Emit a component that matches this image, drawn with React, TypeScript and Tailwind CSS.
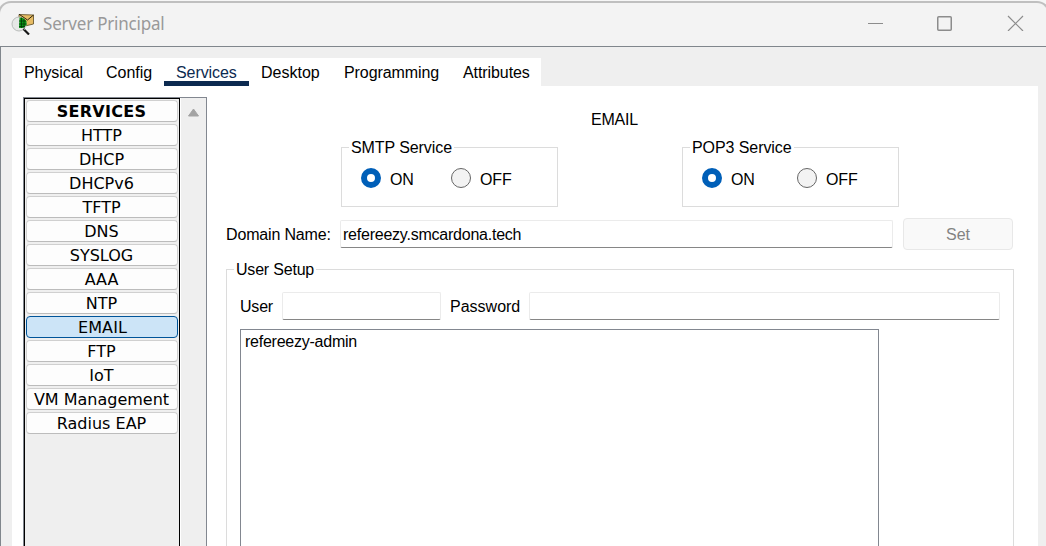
import React from "react";

const services = [
  "HTTP", "DHCP", "DHCPv6", "TFTP", "DNS", "SYSLOG", "AAA", "NTP",
  "EMAIL", "FTP", "IoT", "VM Management", "Radius EAP",
];

function AppIcon() {
  return (
    <svg className="h-6 w-6 shrink-0" viewBox="0 0 24 24">
      <path d="M8 3.5 L22.5 4 L22.5 13 L14 15 L8 11 Z" fill="#e6bb64" stroke="#5c4a20" strokeWidth="0.8" />
      <path d="M8 3.2 L16.5 9 L22.5 4" fill="none" stroke="#2f2810" strokeWidth="1" />
      <circle cx="8" cy="13" r="7" fill="#e6e8e6" stroke="#b9bcba" strokeWidth="1" />
      <path d="M8.5 6.5 L12 7 L15.5 10 L15.5 14 L12 17 L8 17 Z" fill="#0a9a18" />
      <path d="M8 10h7M8 13h7.5M8 15.5h6M10.5 6.5v10.5M13 8v9" stroke="#023806" strokeWidth="0.8" />
      <path d="M12.5 18 L18 23.5" stroke="#161616" strokeWidth="2.2" />
      <path d="M12.5 17.5 L14 19" stroke="#8b8b8b" strokeWidth="1" />
    </svg>
  );
}

function TitleBar() {
  return (
    <header className="flex h-[46px] shrink-0 bg-[#f6f6f6] pt-px">
      <div className="-ml-[2px] flex w-[1052px] shrink-0 items-start rounded-t-[13px] border-2 border-b-0 border-[#bfbfbf] bg-[#f3f3f3] pl-[11px]">
        <div className="pt-2"><AppIcon /></div>
        <h1 className="ml-[8px] mt-[8px] w-[800px] origin-left scale-y-[1.08] font-['Noto_Sans',sans-serif] text-[17px] leading-[26px] tracking-[-0.2px] text-[#999]">
          Server Principal
        </h1>
        <svg className="ml-[25px] mt-[12px] h-4 w-[157px] shrink-0" viewBox="0 0 157 16" fill="none" stroke="#8c8c8c">
          <path d="M0 8.5h15" />
          <rect x="69.75" y="1.75" width="13.5" height="13.5" rx="1" strokeWidth="1.5" />
          <path d="M140 1l15 15M155 1l-15 15" strokeWidth="1.2" />
        </svg>
      </div>
    </header>
  );
}

function Tabs() {
  return (
    <nav className="flex h-7 w-[529px] bg-white leading-[29px] tracking-[-0.08px]">
      <span className="w-[82px] pl-[12px]">Physical</span>
      <span className="w-[70px] pl-[12px] tracking-normal">Config</span>
      <span className="w-[85px] border-b-5 border-[#0c2a50] pl-[12px] text-[#0c2a50]">Services</span>
      <span className="w-[83px] pl-[12px] tracking-normal">Desktop</span>
      <span className="w-[118px] pl-[12px]">Programming</span>
      <span className="pl-[13px]">Attributes</span>
    </nav>
  );
}

function Sidebar() {
  return (
    <aside className="flex h-[460px] w-[184px] shrink-0 border border-[#828790] bg-[#efefef] font-['DejaVu_Sans',sans-serif] text-[16px]">
      <div className="flex w-[156px] flex-col gap-[2px] border border-black p-px">
        <div className="h-[22px] rounded-[4px] border border-[#d0d0d0] border-b-[#bcbcbc] bg-[#fdfdfd] pr-px text-center font-bold leading-[22px] tracking-[0.3px]">
          SERVICES
        </div>
        {services.map((name) => (
          <div
            key={name}
            className={
              name === "EMAIL"
                ? "h-[22px] whitespace-nowrap rounded-[4px] border border-[#005499] bg-[#cce4f7] pl-px text-center leading-[22px] tracking-[0.15px]"
                : "h-[22px] whitespace-nowrap rounded-[4px] border border-[#d0d0d0] border-b-[#bcbcbc] bg-[#fdfdfd] pr-px text-center leading-[22px]"
            }
          >
            {name}
          </div>
        ))}
      </div>
      <div className="w-[26px] border-l border-white pl-[6px] pt-[10px]">
        <svg className="h-[9px] w-[12px]" viewBox="0 0 12 9">
          <path d="M6.5 1 L11.5 8 H1.5 Z" fill="#a3a3a3" stroke="#a3a3a3" strokeLinejoin="round" />
        </svg>
      </div>
    </aside>
  );
}

function Radio({ on }: { on?: boolean }) {
  return on ? (
    <span className="h-5 w-5 shrink-0 rounded-full border-[6px] border-[#005fb8] bg-white" />
  ) : (
    <span className="h-5 w-5 shrink-0 rounded-full border border-[#666] bg-[#f3f3f3]" />
  );
}

function ServiceGroup({ title, wide }: { title: string; wide?: boolean }) {
  return (
    <section className="h-[60px] w-[217px] border border-[#dcdcdc]">
      <h2 className="-mt-[10px] ml-[7px] w-fit bg-white px-[2px] leading-[20px] tracking-[-0.08px]">{title}</h2>
      <div className="mt-[10px] flex h-5 pl-[19px] leading-[23px] tracking-[-0.1px]">
        <Radio on />
        <span className={wide ? "w-[75px] pl-[9px]" : "w-[70px] pl-[9px]"}>ON</span>
        <Radio />
        <span className="pl-[9px]">OFF</span>
      </div>
    </section>
  );
}

function EmailPanel() {
  return (
    <main className="ml-[19px] w-[788px]">
      <h2 className="mt-[13px] pl-[365px] leading-[20px] tracking-[-0.2px]">EMAIL</h2>
      <div className="mt-[17px] flex gap-[124px] pl-[115px]">
        <ServiceGroup title="SMTP Service" />
        <ServiceGroup title="POP3 Service" wide />
      </div>
      <div className="mt-[11px] flex h-8">
        <span className="w-[114px] leading-[33px] tracking-[-0.16px]">Domain Name:</span>
        <div className="mt-[2px] h-7 w-[553px] rounded-[2px] border border-[#ebebeb] border-b-[#868686] pl-[2px] leading-[27px] tracking-[-0.23px]">
          refereezy.smcardona.tech
        </div>
        <button className="ml-[10px] h-8 w-[110px] rounded-[4px] border border-[#e8e8e8] bg-[#f9f9f9] leading-[31px] text-[#838383]">
          Set
        </button>
      </div>
      <section className="mt-[19px] h-[320px] border border-[#dcdcdc]">
        <h2 className="-mt-[10px] ml-[7px] w-fit bg-white px-[2px] leading-[20px] tracking-[-0.2px]">User Setup</h2>
        <div className="mt-[12px] flex h-7 pl-[13px] leading-[29px]">
          <span className="w-[42px] tracking-[-0.2px]">User</span>
          <div className="w-[159px] rounded-[2px] border border-[#ebebeb] border-b-[#868686]" />
          <span className="w-[88px] pl-[9px]">Password</span>
          <div className="w-[471px] rounded-[2px] border border-[#ebebeb] border-b-[#868686]" />
        </div>
        <div className="ml-[13px] mt-[9px] h-[260px] w-[639px] border border-[#828790] pl-[4px] leading-[24px] tracking-[-0.24px]">
          refereezy-admin
        </div>
      </section>
    </main>
  );
}

export default function App() {
  return (
    <div className="flex h-[546px] w-[1046px] flex-col overflow-hidden bg-[#efefef] font-['Liberation_Sans',Arial,sans-serif] text-[16px] text-black">
      <TitleBar />
      <div className="min-h-0 flex-1 border-l border-t border-[#80868c] pl-[11px] pt-[11px]">
        <Tabs />
        <div className="flex h-[460px] w-[1026px] bg-white pl-[11px] pt-[11px]">
          <Sidebar />
          <EmailPanel />
        </div>
      </div>
    </div>
  );
}
